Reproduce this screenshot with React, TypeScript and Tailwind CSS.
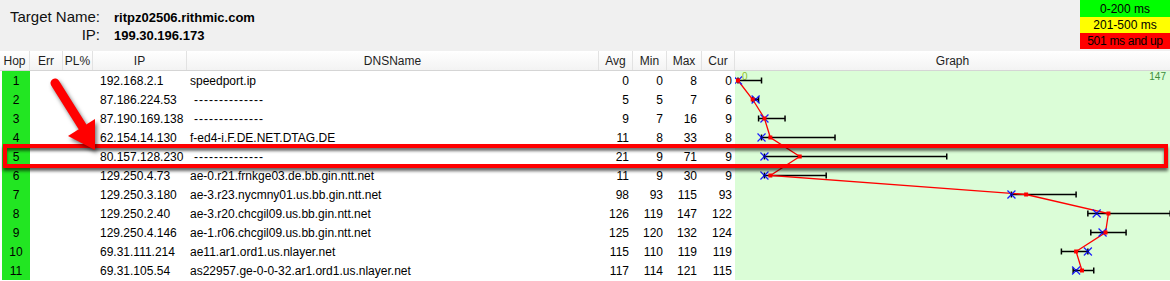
type Hop = {
  hop: number;
  ip: string;
  dns: string;
  avg: number;
  min: number;
  max: number;
  cur: number;
};

const DASH = '--------------';

const hops: Hop[] = [
  { hop: 1, ip: '192.168.2.1', dns: 'speedport.ip', avg: 0, min: 0, max: 8, cur: 0 },
  { hop: 2, ip: '87.186.224.53', dns: DASH, avg: 5, min: 5, max: 7, cur: 6 },
  { hop: 3, ip: '87.190.169.138', dns: DASH, avg: 9, min: 7, max: 16, cur: 9 },
  { hop: 4, ip: '62.154.14.130', dns: 'f-ed4-i.F.DE.NET.DTAG.DE', avg: 11, min: 8, max: 33, cur: 8 },
  { hop: 5, ip: '80.157.128.230', dns: DASH, avg: 21, min: 9, max: 71, cur: 9 },
  { hop: 6, ip: '129.250.4.73', dns: 'ae-0.r21.frnkge03.de.bb.gin.ntt.net', avg: 11, min: 9, max: 30, cur: 9 },
  { hop: 7, ip: '129.250.3.180', dns: 'ae-3.r23.nycmny01.us.bb.gin.ntt.net', avg: 98, min: 93, max: 115, cur: 93 },
  { hop: 8, ip: '129.250.2.40', dns: 'ae-3.r20.chcgil09.us.bb.gin.ntt.net', avg: 126, min: 119, max: 147, cur: 122 },
  { hop: 9, ip: '129.250.4.146', dns: 'ae-1.r06.chcgil09.us.bb.gin.ntt.net', avg: 125, min: 120, max: 132, cur: 124 },
  { hop: 10, ip: '69.31.111.214', dns: 'ae11.ar1.ord1.us.nlayer.net', avg: 115, min: 110, max: 119, cur: 119 },
  { hop: 11, ip: '69.31.105.54', dns: 'as22957.ge-0-0-32.ar1.ord1.us.nlayer.net', avg: 117, min: 114, max: 121, cur: 115 },
];

const ROW = 19;
const sx = (v: number) => 3 + v * 2.94;
const sy = (i: number) => 9.5 + i * ROW;

const headers = ['Hop', 'Err', 'PL%', 'IP', 'DNSName', 'Avg', 'Min', 'Max', 'Cur'];
const cols = 'grid grid-cols-[30px_33px_30px_94px_412px_34px_34px_35px_33px]';

function Graph() {
  const line = hops.map((h, i) => `${sx(h.avg)},${sy(i)}`).join(' ');
  return (
    <svg width="435" height="209" className="block">
      <text x="7" y="9" fontSize="10" fill="#8fbf2a" fontFamily="Liberation Sans, sans-serif">0</text>
      <text x="431" y="9" fontSize="10" fill="#3d8d3d" textAnchor="end" fontFamily="Liberation Sans, sans-serif">147</text>
      {hops.map((h, i) => {
        const y = sy(i);
        return (
          <g key={'bar' + h.hop} stroke="#000" strokeWidth="1.5">
            <line x1={sx(h.min)} y1={y} x2={sx(h.max)} y2={y} />
            <line x1={sx(h.min)} y1={y - 3} x2={sx(h.min)} y2={y + 3} />
            <line x1={sx(h.max)} y1={y - 3} x2={sx(h.max)} y2={y + 3} />
          </g>
        );
      })}
      <polyline points={line} fill="none" stroke="#ff0000" strokeWidth="1.3" />
      {hops.map((h, i) => {
        const y = sy(i);
        const cx = sx(h.cur);
        const ax = sx(h.avg);
        return (
          <g key={'pt' + h.hop}>
            <g stroke="#1a1aff" strokeWidth="1.2">
              <line x1={cx - 4} y1={y - 4} x2={cx + 4} y2={y + 4} />
              <line x1={cx - 4} y1={y + 4} x2={cx + 4} y2={y - 4} />
            </g>
            <rect x={cx - 1} y={y - 1} width="2" height="2" fill="#000080" />
            <rect x={ax - 2} y={y - 2} width="4" height="4" fill="#ff0000" />
          </g>
        );
      })}
    </svg>
  );
}

export default function App() {
  return (
    <div className="relative w-[1170px] h-[281px] overflow-hidden bg-white text-black font-['Liberation_Sans',Arial,sans-serif]">
      {/* target info + legend */}
      <div className="h-[51px] bg-[#f0f0f0] flex justify-between">
        <div className="grid grid-cols-[100px_auto] gap-x-[14px] pt-[6px] auto-rows-[18px] items-baseline">
          <div className="text-[15px] text-right text-[#111]">Target Name:</div>
          <div className="text-[13px] font-bold">ritpz02506.rithmic.com</div>
          <div className="text-[15px] text-right text-[#111]">IP:</div>
          <div className="text-[13px] font-bold">199.30.196.173</div>
        </div>
        <div className="w-[90px] h-[49px] flex flex-col text-[12px] text-center leading-none">
          <div className="h-[17px] bg-[#00ff00] flex items-center justify-center">0-200 ms</div>
          <div className="h-[16px] bg-[#ffff00] flex items-center justify-center">201-500 ms</div>
          <div className="h-[16px] bg-[#ff0000] flex items-center justify-center tracking-[-0.3px]">501 ms and up</div>
        </div>
      </div>

      {/* header */}
      <div className="flex h-[20px] border-b border-[#d5d5d5] bg-gradient-to-b from-white to-[#f3f3f3] text-[12px] text-[#1e1e1e]">
        <div className={cols}>
          {headers.map((h) => (
            <div key={h} className="flex items-center justify-center border-r border-[#e2e2e2]">
              {h}
            </div>
          ))}
        </div>
        <div className="flex-1 flex items-center justify-center">Graph</div>
      </div>

      {/* rows */}
      <div className="flex">
        <div className="w-[735px] text-[12px]">
          {hops.map((h) => (
            <div key={h.hop} className={cols + ' h-[19px] items-stretch'}>
              <div className="ml-[2px] bg-[#22e622] flex items-center justify-center">{h.hop}</div>
              <div />
              <div />
              <div className="flex items-center pl-[7px]">{h.ip}</div>
              {h.dns === DASH ? (
                <div className="flex items-center pl-[7px] tracking-[1px] overflow-hidden">{h.dns}</div>
              ) : (
                <div className="flex items-center pl-[3px] whitespace-nowrap overflow-hidden">{h.dns}</div>
              )}
              <div className="flex items-center justify-end pr-[4px]">{h.avg}</div>
              <div className="flex items-center justify-end pr-[4px]">{h.min}</div>
              <div className="flex items-center justify-end pr-[5px]">{h.max}</div>
              <div className="flex items-center justify-end pr-[3px]">{h.cur}</div>
            </div>
          ))}
        </div>
        <div className="flex-1 h-[209px] bg-[#dbfdd7]">
          <Graph />
        </div>
      </div>

      {/* highlight of hop 5 */}
      <div className="absolute left-[3px] top-[144px] w-[1165px] h-[24px] border-4 border-[#ff0000] shadow-[0_3px_3px_rgba(0,0,0,0.6),inset_0_3px_3px_rgba(0,0,0,0.55)]" />

      {/* arrow */}
      <svg
        className="absolute left-0 top-0 pointer-events-none drop-shadow-[2px_3px_2px_rgba(0,0,0,0.55)]"
        width="130"
        height="170"
      >
        <line x1="55" y1="83" x2="82" y2="126" stroke="#ff0000" strokeWidth="9" strokeLinecap="round" />
        <polygon points="68,136 95,119 95,150" fill="#ff0000" />
      </svg>
    </div>
  );
}
